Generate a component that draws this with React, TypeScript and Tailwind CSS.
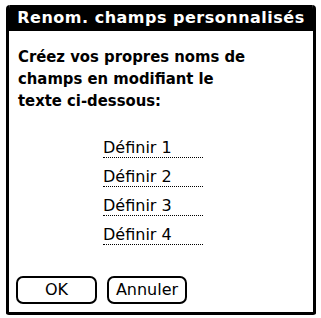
export default function App() {
  const fields = ['Définir 1', 'Définir 2', 'Définir 3', 'Définir 4'];
  return (
    <div className="w-[321px] h-[318px] bg-white pt-[5px] pl-[6px]" style={{ fontFamily: '"DejaVu Sans", sans-serif' }}>
      <div className="w-[310px] h-[310px] flex flex-col rounded-t-[4px] rounded-b-[3px] border-[3px] border-black border-t-0 overflow-hidden">
        <div className="bg-black text-white font-bold text-[16px] h-[26px] -mx-[3px] flex items-center justify-center tracking-[0.5px]">
          Renom. champs personnalisés
        </div>
        <div className="flex-1 flex flex-col px-[7px] pt-[15px]">
          <p
            className="font-bold text-[16.5px] leading-[22px] text-black pl-[2px]"
            style={{ fontFamily: '"DejaVu Sans Condensed", "DejaVu Sans", sans-serif' }}
          >
            Créez vos propres noms de
            <br />
            champs en modifiant le
            <br />
            texte ci-dessous:
          </p>
          <div className="flex flex-col pl-[87px] mt-[17px]">
            {fields.map((f) => (
              <div
                key={f}
                className="w-[100px] h-[29px] pt-[10px] text-[16px] leading-[18px] text-black border-b border-dotted border-black"
              >
                {f}
              </div>
            ))}
          </div>
          <div className="mt-auto mb-[8px] flex gap-[10px]">
            <button className="w-[81px] h-[28px] border-2 border-black rounded-[7px] text-[16px] text-black">
              OK
            </button>
            <button className="w-[80px] h-[28px] border-2 border-black rounded-[7px] text-[16px] text-black">
              Annuler
            </button>
          </div>
        </div>
      </div>
    </div>
  );
}
